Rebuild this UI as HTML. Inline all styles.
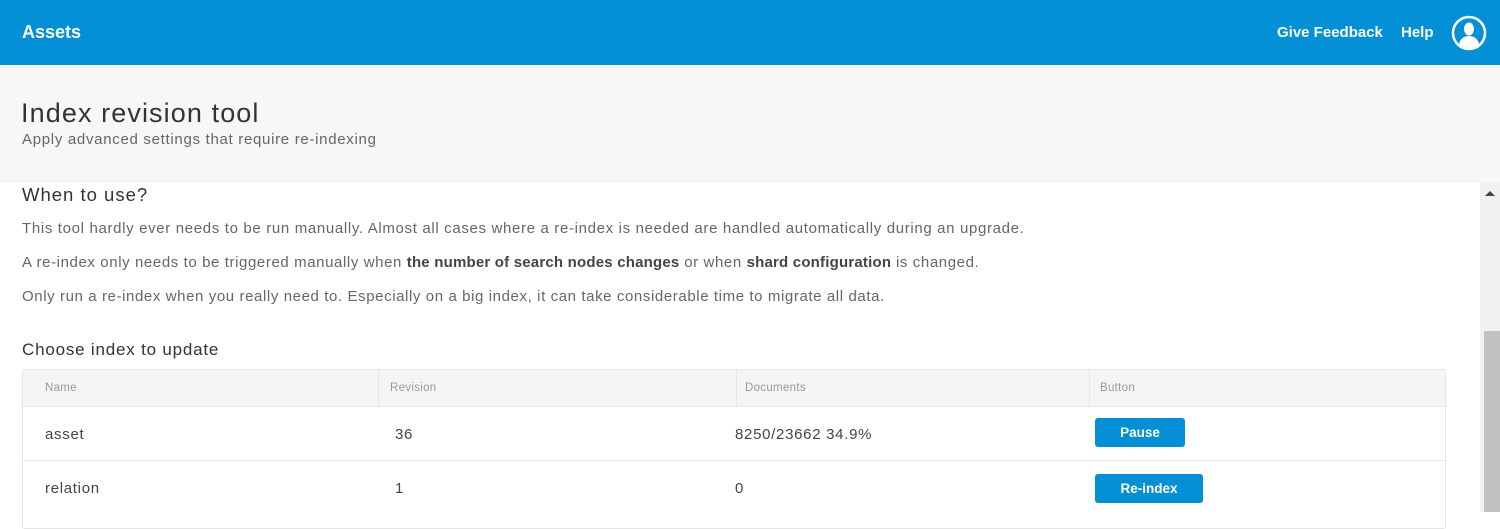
<!DOCTYPE html>
<html><head><style>
*{margin:0;padding:0;box-sizing:border-box}
body{width:1500px;height:512px;overflow:hidden;font-family:"Liberation Sans",sans-serif;background:#fff;position:relative;color:#333}
.top{position:absolute;left:0;top:0;width:1500px;height:65px;background:#0390d6;color:#fff}
.top .t{position:absolute;left:22px;top:22px;font-size:18px;font-weight:bold}
.top .r{position:absolute;top:24px;font-size:15px;font-weight:bold}
.hd{position:absolute;left:0;top:65px;width:1500px;height:118px;background:#f7f7f8}
.abs{position:absolute;white-space:nowrap}
.p{font-size:15px;color:#666;letter-spacing:0.6px}
.p b{color:#444;letter-spacing:0.2px}
.sb{position:absolute;left:1480px;top:183px;width:20px;height:329px;background:#f1f1f1}
.th{position:absolute;left:1484px;top:331px;width:16px;height:181px;background:#c1c1c1}
.tbl{position:absolute;left:22px;top:369px;width:1424px;height:160px;border:1px solid #e6e6e6;border-radius:3px}
.hrow{position:absolute;left:0;top:0;width:100%;height:37px;background:#f5f5f5;border-bottom:1px solid #e6e6e6}
.col{position:absolute;top:0;height:37px;border-left:1px solid #e6e6e6}
.hc{position:absolute;top:12px;font-size:11.5px;color:#999;letter-spacing:0.3px}
.c{position:absolute;font-size:15px;color:#444;letter-spacing:0.7px}
.btn{position:absolute;background:#0390d6;color:#fff;font-weight:bold;font-size:13.5px;text-align:center;border-radius:3px;height:29px;line-height:29px}
</style></head><body>
<div class="top"><div class="t">Assets</div>
<div class="r" style="left:1277px">Give Feedback</div><div class="r" style="left:1401px">Help</div>
<svg style="position:absolute;left:1451px;top:15px" width="36" height="36" viewBox="0 0 36 36"><circle cx="18" cy="18" r="16" fill="none" stroke="#fff" stroke-width="2.5"/><ellipse cx="18" cy="14" rx="5" ry="6.5" fill="#fff"/><path d="M8 29 Q10 21 18 21 Q26 21 28 29 Q23 33 18 33 Q13 33 8 29Z" fill="#fff"/></svg>
</div>
<div class="hd"></div>
<div class="abs" style="left:21px;top:98px;font-size:27px;color:#333;letter-spacing:1.1px">Index revision tool</div>
<div class="abs p" style="left:22px;top:131px;letter-spacing:0.7px">Apply advanced settings that require re-indexing</div>
<div class="abs" style="left:22px;top:184px;font-size:18.5px;color:#333;letter-spacing:1px">When to use?</div>
<div class="abs p" style="left:22px;top:220px;letter-spacing:0.66px">This tool hardly ever needs to be run manually. Almost all cases where a re-index is needed are handled automatically during an upgrade.</div>
<div class="abs p" style="left:22px;top:254px">A re-index only needs to be triggered manually when <b>the number of search nodes changes</b> or when <b>shard configuration</b> is changed.</div>
<div class="abs p" style="left:22px;top:288px">Only run a re-index when you really need to. Especially on a big index, it can take considerable time to migrate all data.</div>
<div class="abs" style="left:22px;top:340px;font-size:17px;color:#333;letter-spacing:0.8px">Choose index to update</div>
<div class="tbl">
<div class="hrow"></div>
<div class="col" style="left:355px"></div><div class="col" style="left:713px"></div><div class="col" style="left:1066px"></div>
<div class="hc" style="left:22px">Name</div><div class="hc" style="left:367px">Revision</div><div class="hc" style="left:722px">Documents</div><div class="hc" style="left:1077px">Button</div>
<div style="position:absolute;left:0;top:90px;width:100%;border-top:1px solid #e6e6e6"></div>
<div class="c" style="left:22px;top:56px">asset</div><div class="c" style="left:372px;top:56px">36</div><div class="c" style="left:712px;top:56px">8250/23662 34.9%</div>
<div class="btn" style="left:1072px;top:48px;width:90px">Pause</div>
<div class="c" style="left:22px;top:110px">relation</div><div class="c" style="left:372px;top:110px">1</div><div class="c" style="left:712px;top:110px">0</div>
<div class="btn" style="left:1072px;top:104px;width:108px">Re-index</div>
</div>
<div class="sb"></div><div class="th"></div>
<div class="abs" style="left:1485px;top:191px;width:0;height:0;border-left:5px solid transparent;border-right:5px solid transparent;border-bottom:5px solid #444"></div>
</body></html>
